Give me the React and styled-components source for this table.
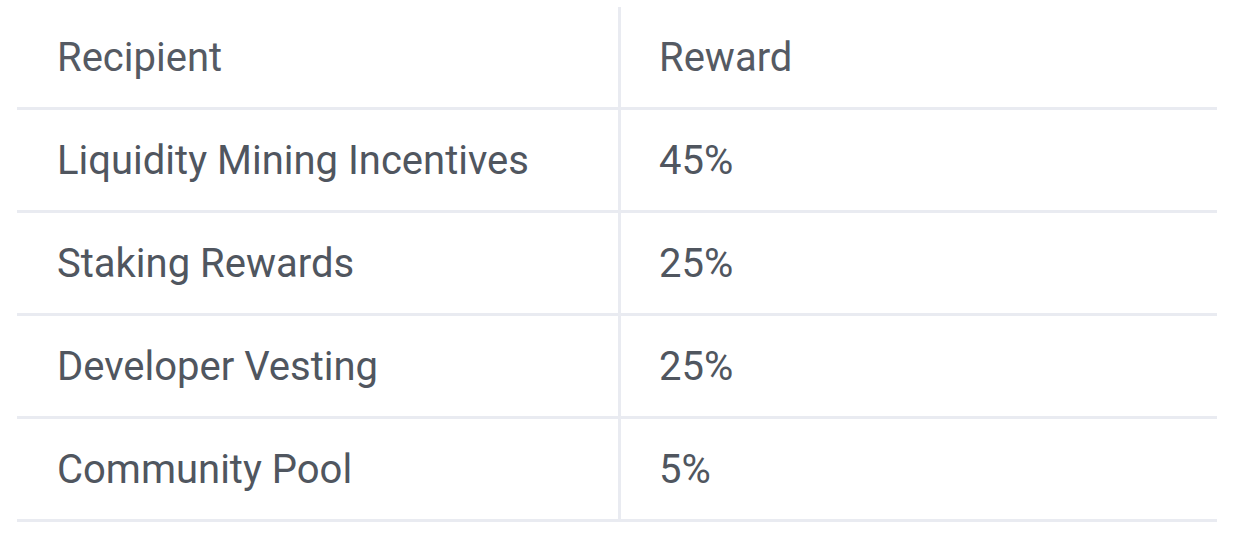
import React from "react";
import styled, { createGlobalStyle } from "styled-components";

const Global = createGlobalStyle`
  html, body { margin: 0; padding: 0; background: #ffffff; }
  body { font-family: Roboto, "Liberation Sans", Arial, sans-serif; }
`;

const Page = styled.div`
  padding: 7px 23px 0 17px;
`;

const Table = styled.div`
  display: flex;
  flex-direction: column;
  width: 1200px;
`;

const Row = styled.div`
  display: grid;
  grid-template-columns: 604px 1fr;
  height: 103px;
  box-sizing: border-box;
  border-bottom: 3px solid #e9ebf1;
`;

const Cell = styled.div`
  display: flex;
  align-items: center;
  padding-left: ${(p) => (p.$first ? "40px" : "38px")};
  box-sizing: border-box;
  font-size: 40px;
  color: ${(p) => (p.$head ? "#555a63" : "#50565f")};
  border-right: ${(p) => (p.$first ? "3px solid #e9ebf1" : "none")};
  white-space: nowrap;
`;

const rows = [
  ["Liquidity Mining Incentives", "45%"],
  ["Staking Rewards", "25%"],
  ["Developer Vesting", "25%"],
  ["Community Pool", "5%"],
];

export default function App() {
  return (
    <>
      <Global />
      <Page>
        <Table>
          <Row>
            <Cell $first $head>Recipient</Cell>
            <Cell $head>Reward</Cell>
          </Row>
          {rows.map(([r, v]) => (
            <Row key={r}>
              <Cell $first>{r}</Cell>
              <Cell>{v}</Cell>
            </Row>
          ))}
        </Table>
      </Page>
    </>
  );
}
